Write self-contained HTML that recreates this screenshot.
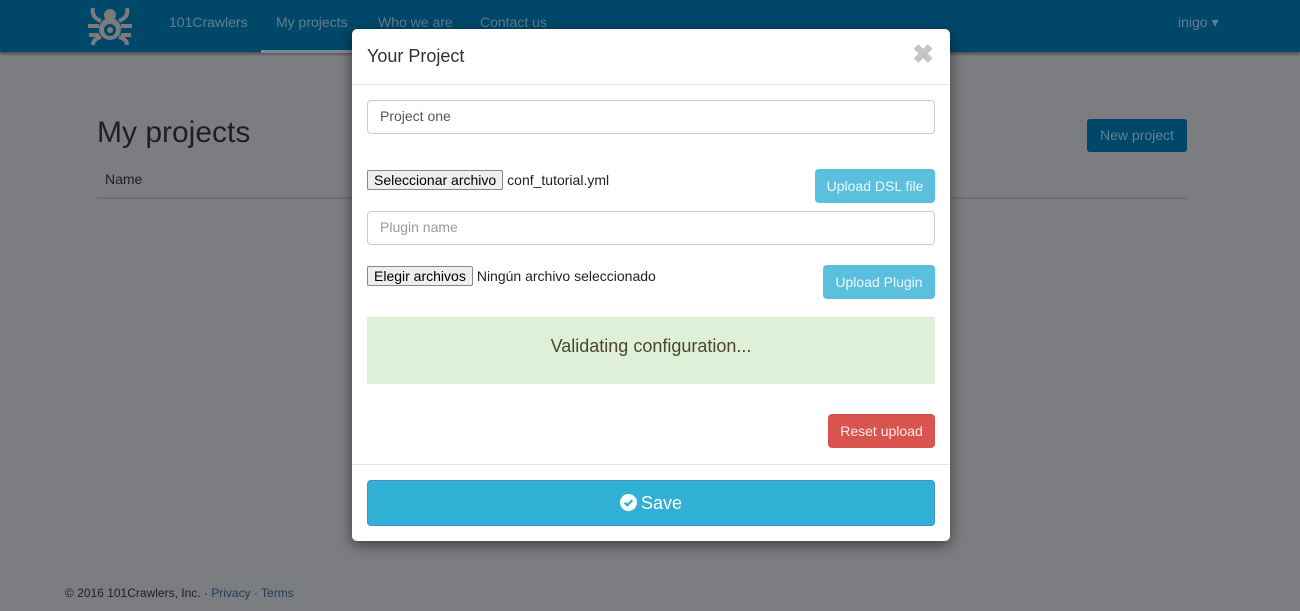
<!DOCTYPE html>
<html><head><meta charset="utf-8"><style>
*{box-sizing:border-box}
body{margin:0;width:1300px;height:611px;background:#7c7d80;font-family:"Liberation Sans",sans-serif;position:relative;overflow:hidden;color:#222}
.nav{position:absolute;top:0;left:0;width:1300px;height:52px;background:#00476a;box-shadow:0 2px 3px rgba(0,0,0,.4)}
.nav a{position:absolute;top:14px;font-size:14px;color:#627e8e}
.act{position:absolute;left:261px;top:50px;width:102px;height:3px;background:#7d8a90}
h1{position:absolute;left:97px;top:116px;margin:0;font-size:30px;font-weight:normal;color:#1e1f21}
.np{position:absolute;left:1087px;top:119px;width:100px;height:33px;background:#00476a;border-radius:3px;color:#5d8095;font-size:14px;text-align:center;line-height:33px}
.name{position:absolute;left:105px;top:171px;font-size:14px;color:#1e1f21}
.hr{position:absolute;left:97px;top:197px;width:1090px;height:2px;background:#6e706e}
.foot{position:absolute;left:65px;top:586px;font-size:12px;color:#1e1f21}
.foot span{color:#1f3d57}
.modal{position:absolute;left:352px;top:29px;width:598px;height:512px;background:#fff;border-radius:5px;box-shadow:0 4px 14px rgba(0,0,0,.5)}
.hd{height:56px;border-bottom:1px solid #e5e5e5;padding:17px 15px;font-size:18px;color:#333}
.x{position:absolute;right:16px;top:10px;font-size:26px;color:#c4c4c4;font-weight:bold}
.inp{position:absolute;left:15px;width:568px;height:34px;border:1px solid #ccc;border-radius:4px;padding:7px 12px;font-size:14px;color:#999}
.fb{position:absolute;font-size:14px;color:#222}
.fb b{display:inline-block;font-weight:normal;background:#eee;border:1px solid #888;border-radius:2px;padding:1px 6px;margin-right:4px;color:#000}
.btn{position:absolute;height:34px;border-radius:4px;color:#eef7fb;font-size:14px;text-align:center;line-height:34px;background:#5bc0de}
.alert{position:absolute;left:15px;top:288px;width:568px;height:67px;background:#dff0d8;color:#4a4630;font-size:18px;text-align:center;line-height:58px}
.save{position:absolute;left:15px;top:451px;width:568px;height:46px;background:#31b0d5;border:1px solid #3f8fd8;border-radius:4px;color:#fff;font-size:18px;text-align:center;line-height:44px}
</style></head><body>
<div class="nav">
<svg style="position:absolute;left:87px;top:5px" width="46" height="42" viewBox="0 0 46 42" fill="#7b7b7b"><circle cx="23" cy="24" r="11"/><circle cx="23" cy="10" r="6"/><path d="M6 3 Q4 12 14 16 M40 3 Q42 12 32 16 M1 21 H12 M45 21 H34 M2 30 H12 M44 30 H34 M6 40 Q6 34 14 32 M40 40 Q40 34 32 32" stroke="#7b7b7b" stroke-width="4" fill="none"/><circle cx="23" cy="25" r="6" fill="#00476a"/><circle cx="23" cy="25" r="3"/></svg>
<a style="left:169px">101Crawlers</a><a style="left:276px">My projects</a><a style="left:378px">Who we are</a><a style="left:480px">Contact us</a><a style="left:1178px">inigo ▾</a>
<div class="act"></div></div>
<h1>My projects</h1><div class="np">New project</div>
<div class="name">Name</div><div class="hr"></div>
<div class="foot">© 2016 101Crawlers, Inc. · <span>Privacy</span> · <span>Terms</span></div>
<div class="modal">
<div class="hd">Your Project</div><div class="x">✖</div>
<div class="inp" style="top:71px;color:#555">Project one</div>
<div class="fb" style="left:15px;top:141px"><b>Seleccionar archivo</b>conf_tutorial.yml</div>
<div class="btn" style="left:463px;top:140px;width:120px">Upload DSL file</div>
<div class="inp" style="top:182px">Plugin name</div>
<div class="fb" style="left:15px;top:237px"><b>Elegir archivos</b>Ningún archivo seleccionado</div>
<div class="btn" style="left:471px;top:236px;width:112px">Upload Plugin</div>
<div class="alert">Validating configuration...</div>
<div class="btn" style="left:476px;top:385px;width:107px;background:#d9534f;color:#fbe9e8">Reset upload</div>
<div style="position:absolute;left:0;top:435px;width:598px;height:1px;background:#e5e5e5"></div>
<div class="save"><svg width="17" height="17" viewBox="0 0 16 16" style="vertical-align:-2px;margin-right:4px"><circle cx="8" cy="8" r="8" fill="#fff"/><path d="M4.5 8.2l2.4 2.4 4.6-4.8" stroke="#31b0d5" stroke-width="2.2" fill="none"/></svg>Save</div>
</div>
</body></html>
